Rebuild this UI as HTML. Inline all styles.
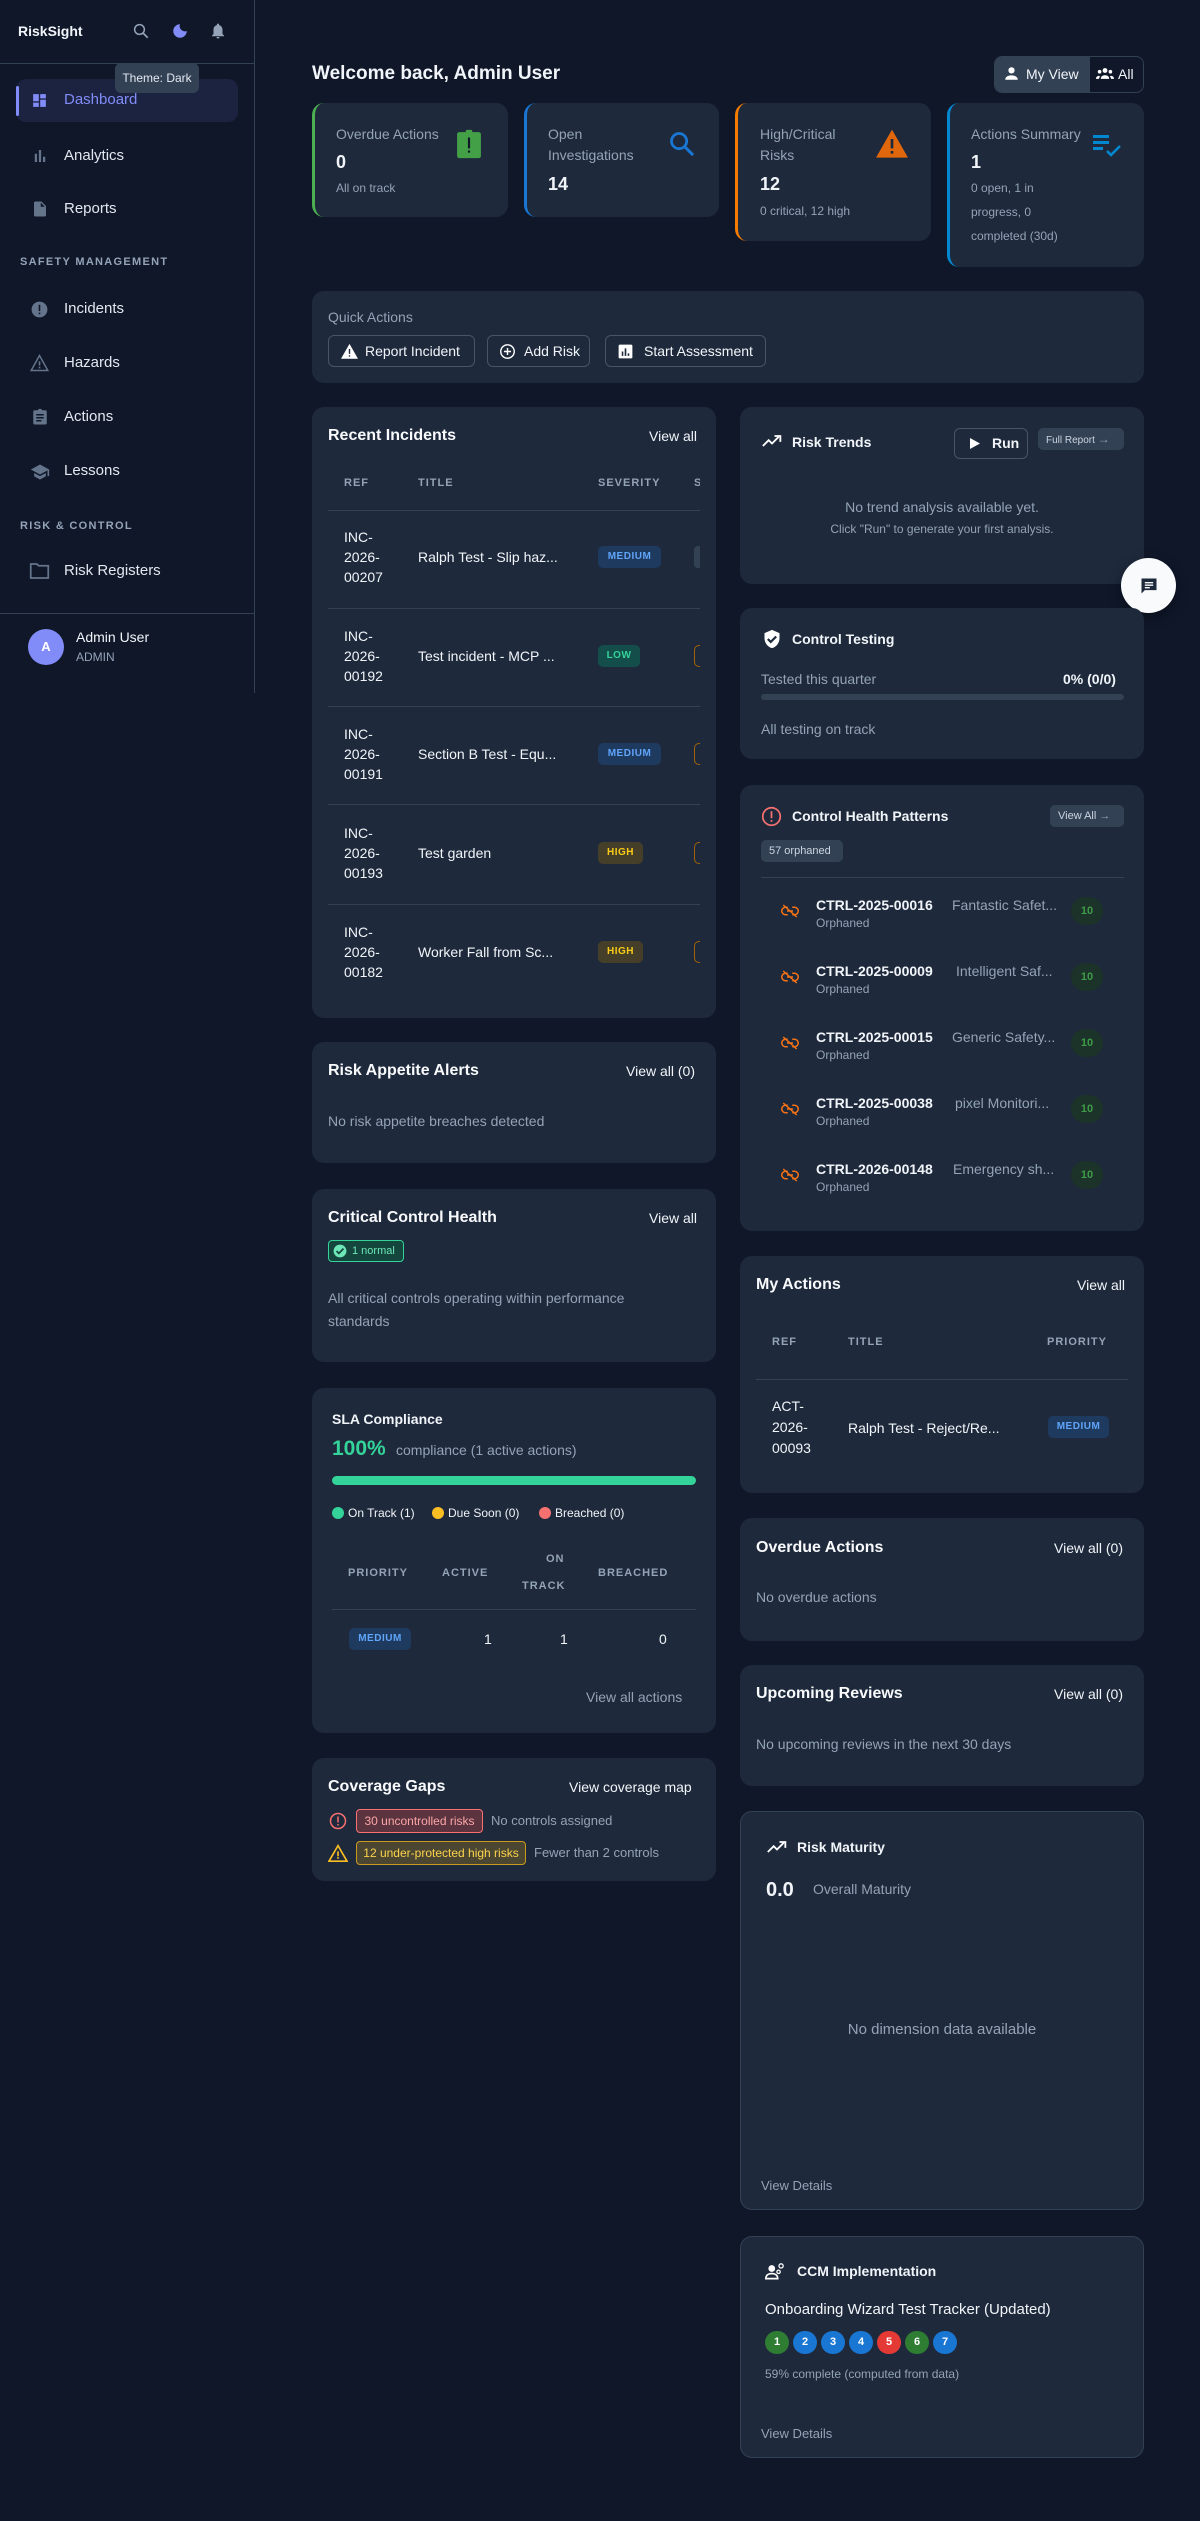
<!DOCTYPE html>
<html><head><meta charset="utf-8">
<style>
*{box-sizing:border-box;margin:0;padding:0}
body{width:1200px;height:2521px;background:#0f1729;font-family:"Liberation Sans",sans-serif;color:#f1f5f9;position:relative;overflow:hidden}
.a{position:absolute;white-space:nowrap}
.card{position:absolute;background:#1e293b;border-radius:12px}
.t{position:absolute;white-space:nowrap;line-height:20px}
.h{font-size:16px;font-weight:bold;color:#f8fafc}
.m{color:#94a3b8}
.s{font-size:14px}
.xs{font-size:12px}
.th{font-size:11px;letter-spacing:1px;color:#94a3b8;font-weight:bold}
.nav{font-size:15px;color:#e2e8f0}
.sec{font-size:11px;letter-spacing:1.3px;color:#94a3b8;font-weight:bold}
.badge{position:absolute;height:22px;border-radius:5px;font-size:10px;font-weight:bold;line-height:22px;text-align:center;letter-spacing:.5px}
.med{background:#1e3a5f;color:#60a5fa}
.low{background:#134e4a;color:#34d399}
.high{background:#453f2a;color:#facc15}
.line{position:absolute;height:1px;background:#334155}
.btn{position:absolute;border:1px solid #475569;border-radius:6px;font-size:14px;line-height:30px;color:#f1f5f9}
</style></head><body>

<!-- Sidebar -->
<div class="a" style="left:254px;top:0;width:1px;height:693px;background:#334155"></div>
<div class="a" style="left:0;top:63px;width:254px;height:1px;background:#334155"></div>
<div class="t" style="left:18px;top:21px;font-size:14px;font-weight:bold">RiskSight</div>
<svg class="a" style="left:132px;top:22px" width="18" height="18" viewBox="0 0 24 24"><circle cx="10" cy="10" r="6.5" fill="none" stroke="#94a3b8" stroke-width="2"/><path d="M15 15l6 6" stroke="#94a3b8" stroke-width="2.2"/></svg>
<svg class="a" style="left:171px;top:22px" width="18" height="18" viewBox="0 0 24 24"><path d="M12 3a9 9 0 1 0 9 9 7 7 0 0 1-9-9z" fill="#818cf8"/></svg>
<svg class="a" style="left:209px;top:21px" width="18" height="20" viewBox="0 0 24 24"><path d="M12 2c-.8 0-1.5.7-1.5 1.5v.7C7.6 5 6 7.6 6 10.5V16l-2 2v1h16v-1l-2-2v-5.5c0-2.9-1.6-5.5-4.5-6.3v-.7C13.5 2.7 12.8 2 12 2zm-2 18a2 2 0 0 0 4 0z" fill="#94a3b8"/></svg>
<div class="a" style="left:115px;top:63px;width:84px;height:30px;background:#334155;border-radius:6px;font-size:12px;line-height:30px;text-align:center;color:#e2e8f0">Theme: Dark</div>
<div class="a" style="left:16px;top:79px;width:222px;height:43px;background:#1c2340;border-radius:10px;z-index:-1"></div>
<div class="a" style="left:16px;top:86px;width:3px;height:30px;background:#818cf8;border-radius:2px"></div>
<svg class="a" style="left:31px;top:92px" width="17" height="17" viewBox="0 0 24 24"><path d="M3 13h8V3H3zm0 8h8v-6H3zm10 0h8V11h-8zm0-18v6h8V3z" fill="#818cf8"/></svg>
<div class="t nav" style="left:64px;top:90px;color:#818cf8">Dashboard</div>
<svg class="a" style="left:31px;top:147px" width="18" height="18" viewBox="0 0 24 24"><path d="M5 9h3v11H5zm5.5-5h3v16h-3zM16 13h3v7h-3z" fill="#64748b"/></svg>
<div class="t nav" style="left:64px;top:146px">Analytics</div>
<svg class="a" style="left:31px;top:200px" width="18" height="18" viewBox="0 0 24 24"><path d="M6 2h8l6 6v12a2 2 0 0 1-2 2H6a2 2 0 0 1-2-2V4a2 2 0 0 1 2-2zm7 1.5V9h5.5z" fill="#64748b"/></svg>
<div class="t nav" style="left:64px;top:199px">Reports</div>
<div class="t sec" style="left:20px;top:252px">SAFETY MANAGEMENT</div>
<svg class="a" style="left:30px;top:300px" width="19" height="19" viewBox="0 0 24 24"><circle cx="12" cy="12" r="10" fill="#64748b"/><path d="M11 6h2v8h-2zm0 10h2v2h-2z" fill="#0f1729"/></svg>
<div class="t nav" style="left:64px;top:299px">Incidents</div>
<svg class="a" style="left:29px;top:353px" width="21" height="20" viewBox="0 0 24 24"><path d="M12 3L2 21h20z" fill="none" stroke="#64748b" stroke-width="1.8"/><path d="M11 10h2v5h-2zm0 6.5h2v2h-2z" fill="#64748b"/></svg>
<div class="t nav" style="left:64px;top:353px">Hazards</div>
<svg class="a" style="left:31px;top:407px" width="18" height="20" viewBox="0 0 24 24"><path d="M19 3h-4.2C14.4 1.8 13.3 1 12 1s-2.4.8-2.8 2H5a2 2 0 0 0-2 2v15a2 2 0 0 0 2 2h14a2 2 0 0 0 2-2V5a2 2 0 0 0-2-2zM7 8h10v2H7zm0 4h10v2H7zm0 4h7v2H7z" fill="#64748b"/></svg>
<div class="t nav" style="left:64px;top:407px">Actions</div>
<svg class="a" style="left:29px;top:462px" width="22" height="20" viewBox="0 0 24 24"><path d="M12 3L1 9l11 6 9-4.9V17h2V9zM5 13.2v4L12 21l7-3.8v-4L12 17z" fill="#64748b"/></svg>
<div class="t nav" style="left:64px;top:461px">Lessons</div>
<div class="t sec" style="left:20px;top:516px">RISK &amp; CONTROL</div>
<svg class="a" style="left:29px;top:562px" width="21" height="18" viewBox="0 0 24 20"><path d="M2 2h7l2 2h11v14H2z" fill="none" stroke="#64748b" stroke-width="2"/></svg>
<div class="t nav" style="left:64px;top:561px">Risk Registers</div>
<div class="a" style="left:0;top:613px;width:254px;height:1px;background:#334155"></div>
<div class="a" style="left:28px;top:629px;width:36px;height:36px;border-radius:50%;background:#818cf8;color:#fff;font-size:13px;font-weight:bold;text-align:center;line-height:36px">A</div>
<div class="t" style="left:76px;top:627px;font-size:14px">Admin User</div>
<div class="t xs m" style="left:76px;top:647px">ADMIN</div>

<!-- Header -->
<div class="t" style="left:312px;top:62px;font-size:19px;font-weight:bold;line-height:24px">Welcome back, Admin User</div>
<div class="a" style="left:994px;top:56px;width:150px;height:37px;border:1px solid #334155;border-radius:8px;background:#0f1729"></div>
<div class="a" style="left:995px;top:57px;width:95px;height:35px;background:#334155;border-radius:7px 0 0 7px"></div>
<svg class="a" style="left:1004px;top:66px" width="15" height="15" viewBox="0 0 24 24"><circle cx="12" cy="7" r="5" fill="#fff"/><path d="M2 22c0-5 5-7 10-7s10 2 10 7z" fill="#fff"/></svg>
<div class="t" style="left:1026px;top:64px;font-size:14px">My View</div>
<svg class="a" style="left:1096px;top:67px" width="18" height="13" viewBox="0 0 30 20"><circle cx="15" cy="5" r="4" fill="#fff"/><circle cx="6" cy="7" r="3" fill="#fff"/><circle cx="24" cy="7" r="3" fill="#fff"/><path d="M8 19c0-4 3-6 7-6s7 2 7 6zM0 19c0-3 2-5 5-5l2 1c-1 1-2 2-2 4zM30 19c0-3-2-5-5-5l-2 1c1 1 2 2 2 4z" fill="#fff"/></svg>
<div class="t" style="left:1118px;top:64px;font-size:14px">All</div>

<!-- Stat cards -->
<div class="card" style="left:312px;top:103px;width:196px;height:114px;border-left:3px solid #4caf50"></div>
<div class="t s m" style="left:336px;top:124px">Overdue Actions</div>
<div class="t" style="left:336px;top:152px;font-size:18px;font-weight:bold">0</div>
<div class="t xs m" style="left:336px;top:178px">All on track</div>
<svg class="a" style="left:456px;top:128px" width="26" height="32" viewBox="0 0 24 28"><rect x="1" y="3" width="22" height="24" rx="2" fill="#43a047"/><rect x="9" y="1" width="6" height="4" rx="1" fill="#43a047"/><path d="M11 8h2v10h-2zm0 12h2v2h-2z" fill="#0f1729"/></svg>

<div class="card" style="left:524px;top:103px;width:195px;height:114px;border-left:3px solid #1976d2"></div>
<div class="t s m" style="left:548px;top:124px">Open</div>
<div class="t s m" style="left:548px;top:145px">Investigations</div>
<div class="t" style="left:548px;top:174px;font-size:18px;font-weight:bold">14</div>
<svg class="a" style="left:668px;top:130px" width="28" height="28" viewBox="0 0 24 24"><circle cx="9.5" cy="9.5" r="6.5" fill="none" stroke="#1976d2" stroke-width="2.4"/><path d="M14.5 14.5l7 7" stroke="#1976d2" stroke-width="2.6"/></svg>

<div class="card" style="left:735px;top:103px;width:196px;height:138px;border-left:3px solid #f57c00"></div>
<div class="t s m" style="left:760px;top:124px">High/Critical</div>
<div class="t s m" style="left:760px;top:145px">Risks</div>
<div class="t" style="left:760px;top:174px;font-size:18px;font-weight:bold">12</div>
<div class="t xs m" style="left:760px;top:201px">0 critical, 12 high</div>
<svg class="a" style="left:876px;top:128px" width="32" height="30" viewBox="0 0 24 22"><path d="M12 1L0 22h24z" fill="#e0670b"/><path d="M11 8h2v7h-2zm0 9h2v2h-2z" fill="#1e293b"/></svg>

<div class="card" style="left:947px;top:103px;width:197px;height:164px;border-left:3px solid #0288d1"></div>
<div class="t s m" style="left:971px;top:124px">Actions Summary</div>
<div class="t" style="left:971px;top:152px;font-size:18px;font-weight:bold">1</div>
<div class="t xs m" style="left:971px;top:178px">0 open, 1 in</div>
<div class="t xs m" style="left:971px;top:202px">progress, 0</div>
<div class="t xs m" style="left:971px;top:226px">completed (30d)</div>
<svg class="a" style="left:1092px;top:132px" width="30" height="26" viewBox="0 0 30 26"><path d="M1 3h16v3H1zm0 6h16v3H1zm0 6h10v3H1z" fill="#0288d1"/><path d="M15 19l4 4 9-9" fill="none" stroke="#0288d1" stroke-width="2.6"/></svg>

<!-- Quick Actions -->
<div class="card" style="left:312px;top:291px;width:832px;height:92px"></div>
<div class="t s m" style="left:328px;top:307px">Quick Actions</div>
<div class="btn" style="left:328px;top:335px;width:147px;height:32px"><svg style="position:absolute;left:12px;top:7px" width="17" height="16" viewBox="0 0 24 22"><path d="M12 1L0 22h24z" fill="#fff"/><path d="M11 8h2v7h-2zm0 9h2v2h-2z" fill="#1e293b"/></svg><span style="position:absolute;left:36px">Report Incident</span></div>
<div class="btn" style="left:487px;top:335px;width:103px;height:32px"><svg style="position:absolute;left:11px;top:7px" width="17" height="17" viewBox="0 0 24 24"><circle cx="12" cy="12" r="9.5" fill="none" stroke="#fff" stroke-width="2"/><path d="M12 7v10M7 12h10" stroke="#fff" stroke-width="2"/></svg><span style="position:absolute;left:36px">Add Risk</span></div>
<div class="btn" style="left:605px;top:335px;width:161px;height:32px"><svg style="position:absolute;left:12px;top:8px" width="15" height="15" viewBox="0 0 24 24"><rect x="1" y="1" width="22" height="22" rx="2" fill="#fff"/><path d="M6 12h2.5v7H6zm4.7-5h2.6v12h-2.6zm4.8 8H18v4h-2.5z" fill="#1e293b"/></svg><span style="position:absolute;left:38px">Start Assessment</span></div>

<!-- Recent Incidents -->
<div class="card" style="left:312px;top:407px;width:404px;height:611px;overflow:hidden"></div>
<div class="t h" style="left:328px;top:426px">Recent Incidents</div>
<div class="t s" style="left:649px;top:426px">View all</div>
<div class="t th" style="left:344px;top:473px">REF</div>
<div class="t th" style="left:418px;top:473px">TITLE</div>
<div class="t th" style="left:598px;top:473px">SEVERITY</div>
<div class="t th" style="left:694px;top:473px;width:6px;overflow:hidden">S</div>
<div class="line" style="left:328px;top:510px;width:372px"></div>
<div class="line" style="left:328px;top:608px;width:372px"></div>
<div class="line" style="left:328px;top:706px;width:372px"></div>
<div class="line" style="left:328px;top:804px;width:372px"></div>
<div class="line" style="left:328px;top:904px;width:372px"></div>

<div class="a s" style="left:344px;top:527px;line-height:20px;white-space:normal">INC-<br>2026-<br>00207</div>
<div class="t s" style="left:418px;top:547px">Ralph Test - Slip haz...</div>
<div class="badge med" style="left:598px;top:546px;width:63px">MEDIUM</div>
<div class="a" style="left:694px;top:546px;width:6px;height:22px;background:#334155;border-radius:4px 0 0 4px"></div>

<div class="a s" style="left:344px;top:626px;line-height:20px">INC-<br>2026-<br>00192</div>
<div class="t s" style="left:418px;top:646px">Test incident - MCP ...</div>
<div class="badge low" style="left:598px;top:645px;width:42px">LOW</div>
<div class="a" style="left:694px;top:645px;width:6px;height:22px;border:1.5px solid #a16207;border-right:none;border-radius:5px 0 0 5px"></div>

<div class="a s" style="left:344px;top:724px;line-height:20px">INC-<br>2026-<br>00191</div>
<div class="t s" style="left:418px;top:744px">Section B Test - Equ...</div>
<div class="badge med" style="left:598px;top:743px;width:63px">MEDIUM</div>
<div class="a" style="left:694px;top:743px;width:6px;height:22px;border:1.5px solid #a16207;border-right:none;border-radius:5px 0 0 5px"></div>

<div class="a s" style="left:344px;top:823px;line-height:20px">INC-<br>2026-<br>00193</div>
<div class="t s" style="left:418px;top:843px">Test garden</div>
<div class="badge high" style="left:598px;top:842px;width:45px">HIGH</div>
<div class="a" style="left:694px;top:842px;width:6px;height:22px;border:1.5px solid #a16207;border-right:none;border-radius:5px 0 0 5px"></div>

<div class="a s" style="left:344px;top:922px;line-height:20px">INC-<br>2026-<br>00182</div>
<div class="t s" style="left:418px;top:942px">Worker Fall from Sc...</div>
<div class="badge high" style="left:598px;top:941px;width:45px">HIGH</div>
<div class="a" style="left:694px;top:941px;width:6px;height:22px;border:1.5px solid #a16207;border-right:none;border-radius:5px 0 0 5px"></div>

<!-- Risk Appetite -->
<div class="card" style="left:312px;top:1042px;width:404px;height:121px"></div>
<div class="t h" style="left:328px;top:1061px">Risk Appetite Alerts</div>
<div class="t s" style="left:626px;top:1061px">View all (0)</div>
<div class="t s m" style="left:328px;top:1111px">No risk appetite breaches detected</div>

<!-- Critical Control Health -->
<div class="card" style="left:312px;top:1189px;width:404px;height:173px"></div>
<div class="t h" style="left:328px;top:1208px">Critical Control Health</div>
<div class="t s" style="left:649px;top:1208px">View all</div>
<div class="a" style="left:328px;top:1240px;width:76px;height:22px;border:1px solid #34d399;border-radius:4px;background:#14463d"></div>
<svg class="a" style="left:333px;top:1244px" width="14" height="14" viewBox="0 0 24 24"><circle cx="12" cy="12" r="11" fill="#6ee7b7"/><path d="M6 12l4 4 8-8" fill="none" stroke="#14463d" stroke-width="3"/></svg>
<div class="t" style="left:352px;top:1241px;font-size:11px;color:#6ee7b7">1 normal</div>
<div class="t s m" style="left:328px;top:1288px">All critical controls operating within performance</div>
<div class="t s m" style="left:328px;top:1311px">standards</div>

<!-- SLA -->
<div class="card" style="left:312px;top:1388px;width:404px;height:345px"></div>
<div class="t" style="left:332px;top:1409px;font-size:14px;font-weight:bold">SLA Compliance</div>
<div class="t" style="left:332px;top:1437px;font-size:21px;font-weight:bold;color:#34d399;line-height:24px">100%</div>
<div class="t s m" style="left:396px;top:1440px">compliance (1 active actions)</div>
<div class="a" style="left:332px;top:1476px;width:364px;height:9px;border-radius:5px;background:#34d399"></div>
<div class="a" style="left:332px;top:1507px;width:12px;height:12px;border-radius:50%;background:#34d399"></div>
<div class="t xs" style="left:348px;top:1503px">On Track (1)</div>
<div class="a" style="left:432px;top:1507px;width:12px;height:12px;border-radius:50%;background:#fbbf24"></div>
<div class="t xs" style="left:448px;top:1503px">Due Soon (0)</div>
<div class="a" style="left:539px;top:1507px;width:12px;height:12px;border-radius:50%;background:#f87171"></div>
<div class="t xs" style="left:555px;top:1503px">Breached (0)</div>
<div class="t th" style="left:348px;top:1563px">PRIORITY</div>
<div class="t th" style="left:442px;top:1563px">ACTIVE</div>
<div class="t th" style="left:546px;top:1549px">ON</div>
<div class="t th" style="left:522px;top:1576px">TRACK</div>
<div class="t th" style="left:598px;top:1563px">BREACHED</div>
<div class="line" style="left:332px;top:1609px;width:364px"></div>
<div class="badge med" style="left:349px;top:1628px;width:62px">MEDIUM</div>
<div class="t s" style="left:484px;top:1629px">1</div>
<div class="t s" style="left:560px;top:1629px">1</div>
<div class="t s" style="left:659px;top:1629px">0</div>
<div class="t s m" style="left:586px;top:1687px">View all actions</div>

<!-- Coverage gaps -->
<div class="card" style="left:312px;top:1758px;width:404px;height:123px"></div>
<div class="t h" style="left:328px;top:1777px">Coverage Gaps</div>
<div class="t s" style="left:569px;top:1777px">View coverage map</div>
<svg class="a" style="left:329px;top:1812px" width="18" height="18" viewBox="0 0 24 24"><circle cx="12" cy="12" r="10" fill="none" stroke="#f87171" stroke-width="2"/><path d="M11 6h2v8h-2zm0 10h2v2h-2z" fill="#f87171"/></svg>
<div class="a" style="left:356px;top:1809px;width:127px;height:24px;border:1px solid #f87171;border-radius:4px;background:#5b3440;color:#fca5a5;font-size:12px;line-height:22px;text-align:center">30 uncontrolled risks</div>
<div class="t xs m" style="left:491px;top:1811px;font-size:13px">No controls assigned</div>
<svg class="a" style="left:328px;top:1844px" width="20" height="18" viewBox="0 0 24 22"><path d="M12 2L1 21h22z" fill="none" stroke="#fbbf24" stroke-width="2"/><path d="M11 9h2v6h-2zm0 7h2v2h-2z" fill="#fbbf24"/></svg>
<div class="a" style="left:356px;top:1841px;width:170px;height:24px;border:1px solid #ca9a1c;border-radius:4px;background:#4b4632;color:#fcd34d;font-size:12px;line-height:22px;text-align:center">12 under-protected high risks</div>
<div class="t m" style="left:534px;top:1843px;font-size:13px">Fewer than 2 controls</div>

<!-- Right column -->
<!-- Risk Trends -->
<div class="card" style="left:740px;top:407px;width:404px;height:177px"></div>
<svg class="a" style="left:762px;top:434px" width="20" height="14" viewBox="0 0 24 16"><path d="M1 14l7-7 4 4 8-8" fill="none" stroke="#fff" stroke-width="2.2"/><path d="M15 2h7v7" fill="none" stroke="#fff" stroke-width="2.2"/></svg>
<div class="t" style="left:792px;top:432px;font-size:14px;font-weight:bold">Risk Trends</div>
<div class="a" style="left:954px;top:428px;width:74px;height:31px;border:1px solid #475569;border-radius:6px"></div>
<svg class="a" style="left:970px;top:438px" width="10" height="11" viewBox="0 0 10 11"><path d="M0 0l10 5.5L0 11z" fill="#fff"/></svg>
<div class="t s" style="left:992px;top:433px;font-weight:bold">Run</div>
<div class="a" style="left:1038px;top:428px;width:86px;height:22px;background:#334155;border-radius:5px;font-size:10px;line-height:22px;color:#cbd5e1;padding-left:8px">Full Report <span style="color:#94a3b8;font-size:12px">→</span></div>
<div class="t s m" style="left:740px;top:497px;width:404px;text-align:center">No trend analysis available yet.</div>
<div class="t xs m" style="left:740px;top:519px;width:404px;text-align:center">Click "Run" to generate your first analysis.</div>

<!-- Chat FAB -->
<div class="a" style="left:1121px;top:558px;width:55px;height:55px;border-radius:50%;background:#f8fafc;box-shadow:0 4px 12px rgba(0,0,0,.4)"></div>
<svg class="a" style="left:1139px;top:576px" width="20" height="20" viewBox="0 0 24 24"><path d="M3 3h18v14H7l-4 4z" fill="#1e293b"/><path d="M7 8h10M7 11h10M7 14h6" stroke="#f8fafc" stroke-width="1.6"/></svg>

<!-- Control Testing -->
<div class="card" style="left:740px;top:608px;width:404px;height:151px"></div>
<svg class="a" style="left:762px;top:629px" width="20" height="20" viewBox="0 0 24 24"><path d="M12 1L3 5v6c0 5.5 3.8 10.7 9 12 5.2-1.3 9-6.5 9-12V5z" fill="#fff"/><path d="M7 12l3.5 3.5L17 9" fill="none" stroke="#1e293b" stroke-width="2.6"/></svg>
<div class="t" style="left:792px;top:629px;font-size:14px;font-weight:bold">Control Testing</div>
<div class="t s m" style="left:761px;top:669px">Tested this quarter</div>
<div class="t s" style="left:1063px;top:669px;font-weight:bold">0% (0/0)</div>
<div class="a" style="left:761px;top:694px;width:363px;height:6px;border-radius:3px;background:#334155"></div>
<div class="t s m" style="left:761px;top:719px">All testing on track</div>

<!-- Control Health Patterns -->
<div class="card" style="left:740px;top:785px;width:404px;height:446px"></div>
<svg class="a" style="left:761px;top:806px" width="21" height="21" viewBox="0 0 24 24"><circle cx="12" cy="12" r="10" fill="none" stroke="#f87171" stroke-width="2"/><path d="M11 6h2v8h-2zm0 10h2v2h-2z" fill="#f87171"/></svg>
<div class="t" style="left:792px;top:806px;font-size:14px;font-weight:bold">Control Health Patterns</div>
<div class="a" style="left:1050px;top:805px;width:74px;height:22px;background:#334155;border-radius:5px;font-size:11px;line-height:22px;color:#cbd5e1;padding-left:8px">View All <span style="color:#94a3b8">→</span></div>
<div class="a" style="left:761px;top:840px;width:82px;height:22px;background:#334155;border-radius:5px;font-size:11px;line-height:22px;color:#cbd5e1;padding-left:8px">57 orphaned</div>
<div class="line" style="left:761px;top:877px;width:363px"></div>

<div id="rows"></div>
<!-- rows -->
<svg class="a" style="left:781px;top:904px" width="18" height="14" viewBox="0 0 24 18"><path d="M9 4H6a5 5 0 0 0 0 10h3M15 4h3a5 5 0 0 1 0 10h-3M8 9h8M3 1l18 16" fill="none" stroke="#f97316" stroke-width="2"/></svg>
<div class="t s" style="left:816px;top:895px;font-weight:bold">CTRL-2025-00016</div>
<div class="t s m" style="left:952px;top:895px">Fantastic Safet...</div>
<div class="t xs m" style="left:816px;top:913px">Orphaned</div>
<div class="a" style="left:1071px;top:897px;width:32px;height:28px;border-radius:14px;background:#1c3329;color:#3f9b48;font-size:11px;line-height:28px;text-align:center;font-weight:bold">10</div>

<svg class="a" style="left:781px;top:970px" width="18" height="14" viewBox="0 0 24 18"><path d="M9 4H6a5 5 0 0 0 0 10h3M15 4h3a5 5 0 0 1 0 10h-3M8 9h8M3 1l18 16" fill="none" stroke="#f97316" stroke-width="2"/></svg>
<div class="t s" style="left:816px;top:961px;font-weight:bold">CTRL-2025-00009</div>
<div class="t s m" style="left:956px;top:961px">Intelligent Saf...</div>
<div class="t xs m" style="left:816px;top:979px">Orphaned</div>
<div class="a" style="left:1071px;top:963px;width:32px;height:28px;border-radius:14px;background:#1c3329;color:#3f9b48;font-size:11px;line-height:28px;text-align:center;font-weight:bold">10</div>

<svg class="a" style="left:781px;top:1036px" width="18" height="14" viewBox="0 0 24 18"><path d="M9 4H6a5 5 0 0 0 0 10h3M15 4h3a5 5 0 0 1 0 10h-3M8 9h8M3 1l18 16" fill="none" stroke="#f97316" stroke-width="2"/></svg>
<div class="t s" style="left:816px;top:1027px;font-weight:bold">CTRL-2025-00015</div>
<div class="t s m" style="left:952px;top:1027px">Generic Safety...</div>
<div class="t xs m" style="left:816px;top:1045px">Orphaned</div>
<div class="a" style="left:1071px;top:1029px;width:32px;height:28px;border-radius:14px;background:#1c3329;color:#3f9b48;font-size:11px;line-height:28px;text-align:center;font-weight:bold">10</div>

<svg class="a" style="left:781px;top:1102px" width="18" height="14" viewBox="0 0 24 18"><path d="M9 4H6a5 5 0 0 0 0 10h3M15 4h3a5 5 0 0 1 0 10h-3M8 9h8M3 1l18 16" fill="none" stroke="#f97316" stroke-width="2"/></svg>
<div class="t s" style="left:816px;top:1093px;font-weight:bold">CTRL-2025-00038</div>
<div class="t s m" style="left:955px;top:1093px">pixel Monitori...</div>
<div class="t xs m" style="left:816px;top:1111px">Orphaned</div>
<div class="a" style="left:1071px;top:1095px;width:32px;height:28px;border-radius:14px;background:#1c3329;color:#3f9b48;font-size:11px;line-height:28px;text-align:center;font-weight:bold">10</div>

<svg class="a" style="left:781px;top:1168px" width="18" height="14" viewBox="0 0 24 18"><path d="M9 4H6a5 5 0 0 0 0 10h3M15 4h3a5 5 0 0 1 0 10h-3M8 9h8M3 1l18 16" fill="none" stroke="#f97316" stroke-width="2"/></svg>
<div class="t s" style="left:816px;top:1159px;font-weight:bold">CTRL-2026-00148</div>
<div class="t s m" style="left:953px;top:1159px">Emergency sh...</div>
<div class="t xs m" style="left:816px;top:1177px">Orphaned</div>
<div class="a" style="left:1071px;top:1161px;width:32px;height:28px;border-radius:14px;background:#1c3329;color:#3f9b48;font-size:11px;line-height:28px;text-align:center;font-weight:bold">10</div>

<!-- My Actions -->
<div class="card" style="left:740px;top:1256px;width:404px;height:237px"></div>
<div class="t h" style="left:756px;top:1275px">My Actions</div>
<div class="t s" style="left:1077px;top:1275px">View all</div>
<div class="t th" style="left:772px;top:1332px">REF</div>
<div class="t th" style="left:848px;top:1332px">TITLE</div>
<div class="t th" style="left:1047px;top:1332px">PRIORITY</div>
<div class="line" style="left:756px;top:1379px;width:372px"></div>
<div class="a s" style="left:772px;top:1396px;line-height:21px">ACT-<br>2026-<br>00093</div>
<div class="t s" style="left:848px;top:1418px">Ralph Test - Reject/Re...</div>
<div class="badge med" style="left:1048px;top:1416px;width:61px">MEDIUM</div>

<!-- Overdue -->
<div class="card" style="left:740px;top:1518px;width:404px;height:123px"></div>
<div class="t h" style="left:756px;top:1538px">Overdue Actions</div>
<div class="t s" style="left:1054px;top:1538px">View all (0)</div>
<div class="t s m" style="left:756px;top:1587px">No overdue actions</div>

<!-- Upcoming -->
<div class="card" style="left:740px;top:1665px;width:404px;height:121px"></div>
<div class="t h" style="left:756px;top:1684px">Upcoming Reviews</div>
<div class="t s" style="left:1054px;top:1684px">View all (0)</div>
<div class="t s m" style="left:756px;top:1734px">No upcoming reviews in the next 30 days</div>

<!-- Risk Maturity -->
<div class="card" style="left:740px;top:1811px;width:404px;height:399px;border:1px solid #334155"></div>
<svg class="a" style="left:767px;top:1840px" width="20" height="14" viewBox="0 0 24 16"><path d="M1 14l7-7 4 4 8-8" fill="none" stroke="#fff" stroke-width="2.2"/><path d="M15 2h7v7" fill="none" stroke="#fff" stroke-width="2.2"/></svg>
<div class="t" style="left:797px;top:1837px;font-size:14px;font-weight:bold">Risk Maturity</div>
<div class="t" style="left:766px;top:1878px;font-size:20px;font-weight:bold;line-height:24px">0.0</div>
<div class="t s m" style="left:813px;top:1879px">Overall Maturity</div>
<div class="t m" style="left:740px;top:2020px;width:404px;text-align:center;font-size:15px">No dimension data available</div>
<div class="t s m" style="left:761px;top:2176px;font-size:13px">View Details</div>

<!-- CCM -->
<div class="card" style="left:740px;top:2236px;width:404px;height:222px;border:1px solid #334155"></div>
<svg class="a" style="left:765px;top:2262px" width="22" height="18" viewBox="0 0 26 20"><circle cx="8" cy="7" r="4" fill="#fff"/><path d="M1 19c0-4 3-6 7-6s7 2 7 6z" fill="none" stroke="#fff" stroke-width="2"/><circle cx="19" cy="4" r="2.5" fill="none" stroke="#fff" stroke-width="1.5"/><circle cx="16" cy="11" r="2" fill="none" stroke="#fff" stroke-width="1.5"/></svg>
<div class="t" style="left:797px;top:2261px;font-size:14px;font-weight:bold">CCM Implementation</div>
<div class="t" style="left:765px;top:2300px;font-size:15px">Onboarding Wizard Test Tracker (Updated)</div>
<div class="a" style="left:765px;top:2331px;font-size:11px;font-weight:bold;color:#fff;line-height:23px">
<span style="display:inline-block;width:24px;height:23px;border-radius:12px;background:#2e7d32;text-align:center;margin-right:4px">1</span><span style="display:inline-block;width:24px;height:23px;border-radius:12px;background:#1976d2;text-align:center;margin-right:4px">2</span><span style="display:inline-block;width:24px;height:23px;border-radius:12px;background:#1976d2;text-align:center;margin-right:4px">3</span><span style="display:inline-block;width:24px;height:23px;border-radius:12px;background:#1976d2;text-align:center;margin-right:4px">4</span><span style="display:inline-block;width:24px;height:23px;border-radius:12px;background:#e53935;text-align:center;margin-right:4px">5</span><span style="display:inline-block;width:24px;height:23px;border-radius:12px;background:#2e7d32;text-align:center;margin-right:4px">6</span><span style="display:inline-block;width:24px;height:23px;border-radius:12px;background:#1976d2;text-align:center">7</span></div>
<div class="t xs m" style="left:765px;top:2364px">59% complete (computed from data)</div>
<div class="t s m" style="left:761px;top:2424px;font-size:13px">View Details</div>

</body></html>
